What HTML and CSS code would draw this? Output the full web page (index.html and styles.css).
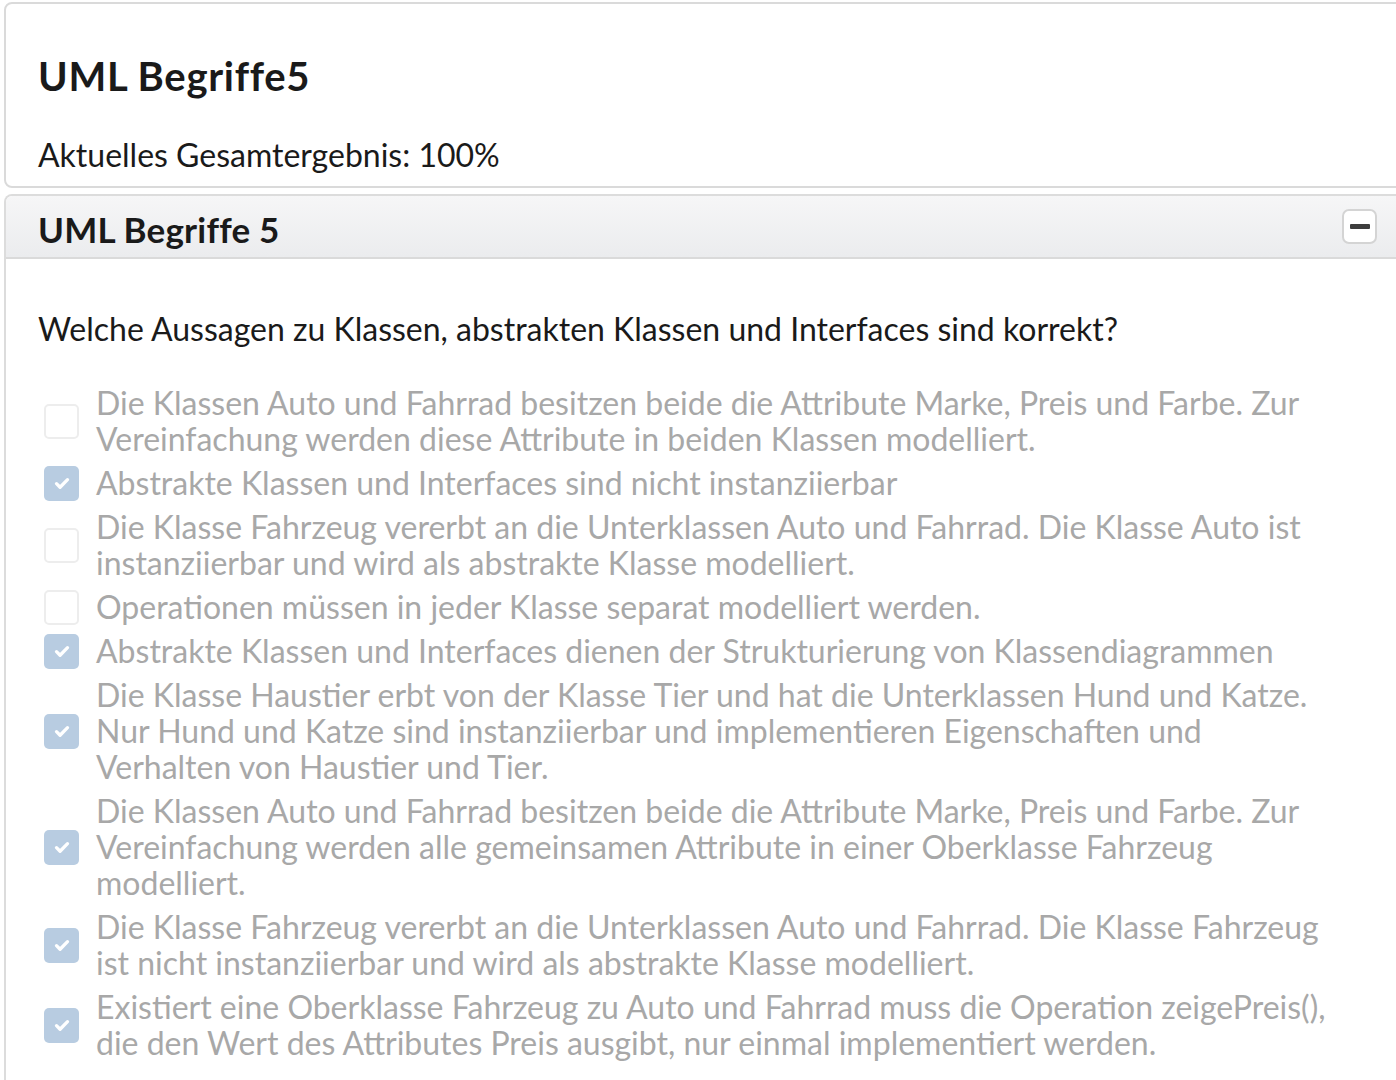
FILE: index.html
```html
<!DOCTYPE html>
<html lang="de">
<head>
<meta charset="utf-8">
<title>UML Begriffe5</title>
<link rel="stylesheet" href="styles.css">
</head>
<body>
<div class="page">
  <section class="card">
    <h1 class="title">UML Begriffe5</h1>
    <p class="score">Aktuelles Gesamtergebnis: 100%</p>
  </section>
  <section class="panel">
    <header class="panel-head">
      <h2 class="panel-title">UML Begriffe 5</h2>
      <button class="toggle" type="button" aria-label="Einklappen"><span class="toggle-bar"></span></button>
    </header>
    <div class="panel-body">
      <p class="question">Welche Aussagen zu Klassen, abstrakten Klassen und Interfaces sind korrekt?</p>
      <ul class="options">
        <li class="option"><span class="box"></span><span class="label">Die Klassen Auto und Fahrrad besitzen beide die Attribute Marke, Preis und Farbe. Zur Vereinfachung werden diese Attribute in beiden Klassen modelliert.</span></li>
        <li class="option"><span class="box checked"><svg viewBox="0 0 16 16"><path d="M4 8.5l2.6 2.6L12 5.6"/></svg></span><span class="label">Abstrakte Klassen und Interfaces sind nicht instanziierbar</span></li>
        <li class="option"><span class="box"></span><span class="label">Die Klasse Fahrzeug vererbt an die Unterklassen Auto und Fahrrad. Die Klasse Auto ist instanziierbar und wird als abstrakte Klasse modelliert.</span></li>
        <li class="option"><span class="box"></span><span class="label">Operationen müssen in jeder Klasse separat modelliert werden.</span></li>
        <li class="option"><span class="box checked"><svg viewBox="0 0 16 16"><path d="M4 8.5l2.6 2.6L12 5.6"/></svg></span><span class="label">Abstrakte Klassen und Interfaces dienen der Strukturierung von Klassendiagrammen</span></li>
        <li class="option"><span class="box checked"><svg viewBox="0 0 16 16"><path d="M4 8.5l2.6 2.6L12 5.6"/></svg></span><span class="label">Die Klasse Haustier erbt von der Klasse Tier und hat die Unterklassen Hund und Katze. Nur Hund und Katze sind instanziierbar und implementieren Eigenschaften und Verhalten von Haustier und Tier.</span></li>
        <li class="option"><span class="box checked"><svg viewBox="0 0 16 16"><path d="M4 8.5l2.6 2.6L12 5.6"/></svg></span><span class="label">Die Klassen Auto und Fahrrad besitzen beide die Attribute Marke, Preis und Farbe. Zur Vereinfachung werden alle gemeinsamen Attribute in einer Oberklasse Fahrzeug modelliert.</span></li>
        <li class="option"><span class="box checked"><svg viewBox="0 0 16 16"><path d="M4 8.5l2.6 2.6L12 5.6"/></svg></span><span class="label">Die Klasse Fahrzeug vererbt an die Unterklassen Auto und Fahrrad. Die Klasse Fahrzeug ist nicht instanziierbar und wird als abstrakte Klasse modelliert.</span></li>
        <li class="option"><span class="box checked"><svg viewBox="0 0 16 16"><path d="M4 8.5l2.6 2.6L12 5.6"/></svg></span><span class="label">Existiert eine Oberklasse Fahrzeug zu Auto und Fahrrad muss die Operation zeigePreis(), die den Wert des Attributes Preis ausgibt, nur einmal implementiert werden.</span></li>
      </ul>
    </div>
  </section>
</div>
</body>
</html>
```

FILE: styles.css
```css
html, body {
  margin: 0;
  padding: 0;
  background: #ffffff;
  overflow: hidden;
}

body {
  font-family: "Lato", "Open Sans", sans-serif;
  color: #1b1b1b;
}

.page {
  padding: 2px 0 0 4px;
  width: 1412px;
}

.card {
  border: 2px solid #dadada;
  border-radius: 8px;
  padding: 49px 36px 12px 32px;
}

.title {
  margin: 0;
  font-size: 40px;
  font-weight: 700;
  letter-spacing: 0.7px;
  line-height: 46px;
  color: #1a1a1a;
}

.score {
  margin: 37px 0 0;
  font-size: 32px;
  line-height: 38px;
  color: #1a1a1a;
}

.panel {
  margin-top: 6px;
  border: 2px solid #dcdcdc;
  border-bottom: none;
  border-radius: 8px 8px 0 0;
}

.panel-head {
  box-sizing: border-box;
  display: flex;
  align-items: center;
  justify-content: space-between;
  height: 63px;
  padding: 5px 37px 0 32px;
  background: linear-gradient(#f6f6f7, #ebecee);
  border-bottom: 2px solid #dadada;
  border-radius: 6px 6px 0 0;
}

.panel-title {
  margin: 0;
  font-size: 35px;
  font-weight: 700;
  letter-spacing: 0.2px;
  color: #1a1a1a;
  line-height: 40px;
}

.toggle {
  width: 35px;
  height: 35px;
  margin-top: -5px;
  padding: 0;
  border: 2px solid #d4d4d4;
  border-radius: 7px;
  background: #ffffff;
  display: flex;
  align-items: center;
  justify-content: center;
}

.toggle-bar {
  display: block;
  width: 20px;
  height: 5px;
  border-radius: 1px;
  background: #3d3d3d;
}

.panel-body {
  padding: 51px 0 40px 32px;
}

.question {
  margin: 0 0 37px;
  font-size: 32px;
  line-height: 38px;
  color: #1a1a1a;
}

.options {
  list-style: none;
  margin: 0;
  padding: 0 0 0 6px;
  width: 1300px;
}

.option {
  display: flex;
  align-items: center;
  gap: 17px;
  margin-bottom: 8px;
}

.box {
  flex: none;
  width: 35px;
  height: 35px;
  box-sizing: border-box;
  border: 2px solid #ededed;
  border-radius: 5px;
  background: #ffffff;
  display: flex;
  align-items: center;
  justify-content: center;
}

.box.checked {
  border: none;
  background: #b8cce1;
}

.box svg {
  width: 22px;
  height: 22px;
  fill: none;
  stroke: #ffffff;
  stroke-width: 2.4;
  stroke-linecap: round;
  stroke-linejoin: round;
}

.label {
  width: 1243px;
  font-size: 32px;
  line-height: 36px;
  color: #a8a8a8;
}
```
